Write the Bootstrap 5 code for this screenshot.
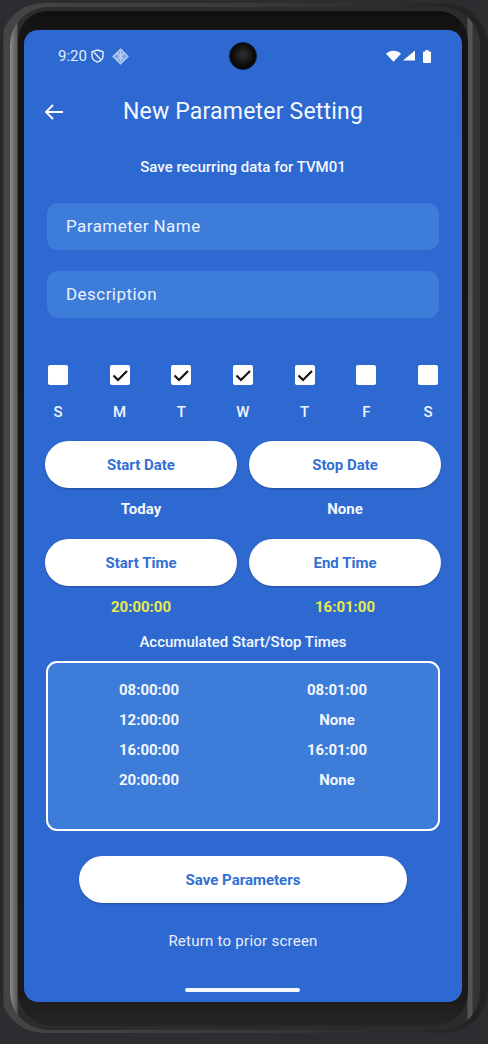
<!DOCTYPE html>
<html lang="en"><head><meta charset="utf-8"><title>New Parameter Setting</title>
<link href="https://cdn.jsdelivr.net/npm/bootstrap@5.3.0/dist/css/bootstrap.min.css" rel="stylesheet">
<style>
html,body{height:100%;margin:0}
body{background:#2b2d30;font-family:Roboto,"Liberation Sans",sans-serif;overflow:hidden;color:#fff}
.stage{width:488px;height:1044px;padding-top:3px;overflow:hidden}
.bezel-out{height:1030px;border-radius:44px;background:linear-gradient(90deg,#262626 0,#2a2a2a 3px,#454545 4px,#3a3a3a 50%,#222 100%);padding:4px 8px 3px 10px}
.bezel-mid{height:100%;border-radius:38px;background:linear-gradient(90deg,#8a8a8a 0,#5a5a5a 7px,#2c2c2c 8px,#2c2c2c calc(100% - 13px),#555 calc(100% - 12px),#555 calc(100% - 8px),#343434 calc(100% - 7px),#343434 100%);padding:4px 12px 4px 8px}
.bezel-in{height:100%;border-radius:30px 30px 34px 34px;background:linear-gradient(#0f0f0f 0,#141414 1.500%,#1a1a1a 97%,#262626 100%);padding:19px 0 0 6px}
.screen{position:relative;width:438px;height:972px;border-radius:14px;background:#2e69d1;overflow:hidden;padding:0 21px}
.cam{position:absolute;left:205px;top:12px;width:28px;height:28px;border-radius:50%;background:radial-gradient(circle at 50% 45%,#333 0,#0c0c0c 55%,#000 100%);border:1px solid #0a1a33}
.sbar{height:52px;padding:0 10px 0 9px;font-size:15px;color:#e4edfb}
.sbar svg{display:block}
.nudge{margin-left:2px}
.appbar{height:59px;margin:0 0 0 -1px}
.appbar h1{font-size:23px;font-weight:400;margin:0;flex:1;text-align:center;color:#f3f7fe;padding-right:18px;line-height:1;letter-spacing:.2px}
.sub{font-size:15px;font-weight:500;text-align:center;line-height:20px;margin:16px 0 26px;color:#f3f7fe}
.fld{display:block;width:392px;margin:0 0 21px 2px;height:47px;border-radius:11px;border:0;background:#3d7cd8;color:#fff;padding:0 19px 2px;font-size:17px;letter-spacing:.45px;font-family:inherit}
.fld::placeholder{color:#eaf1fc;opacity:1}
.days{margin:47px 0 0 3px;width:390px}
.dayc{width:20px;display:flex;flex-direction:column;align-items:center}
.tick{width:20px;height:20px;border-radius:2px;background:#fff;display:flex;align-items:center;justify-content:center}
.dayl{font-size:15px;font-weight:500;line-height:20px;margin-top:17px;color:#eef4fd}
.pair{display:grid;grid-template-columns:192px 192px;column-gap:12px;margin-top:19px;width:396px}
.pill{border:0;background:#fff;color:#3270d4;font-weight:700;font-size:15px;height:47px;border-radius:24px;width:100%;padding:2px 0 0;box-shadow:0 1px 2px rgba(0,0,0,.25);font-family:inherit}
.pill:hover,.pill:active{background:#fff!important;color:#3270d4!important}
.val{text-align:center;font-size:15px;font-weight:700;line-height:20px;margin-top:11px;color:#f3f7fe}
.val.hot{color:#e8ea4e}
.pair.second{margin-top:20px}
.acc{font-size:15px;font-weight:500;text-align:center;line-height:20px;margin:15px 0 9px;color:#f3f7fe}
.tbox{width:394px;margin-left:1px;height:170px;background:#3d7cd8;border:2px solid #fff;border-radius:11px;padding:12px 0 0}
.trow{display:grid;grid-template-columns:202px 174px;height:30px;font-size:15px;font-weight:700;line-height:30px;color:#f3f7fe;text-align:center}
.save{display:block;width:328px;margin:25px 0 0 34px}
.back{text-align:center;font-size:15px;line-height:20px;margin-top:28px;letter-spacing:.25px;color:#e8effb}
.home{position:absolute;left:161px;bottom:10px;width:115px;height:4px;border-radius:2px;background:#f4f8fe}
</style></head>
<body>
<div class="stage"><div class="bezel-out"><div class="bezel-mid"><div class="bezel-in">
<main class="screen">
<div class="cam"></div>
<div class="sbar d-flex align-items-center justify-content-between">
 <div class="d-flex align-items-center gap-1 ps-1"><span>9:20</span>
  <svg width="13" height="14" viewBox="0 0 13 14" fill="none" stroke="#e4edfb" stroke-width="1.4"><path d="M6.5 1 12 2.8V7c0 3-2.3 5-5.5 6C3.300 12 1 10 1 7V2.800Z"/><path d="M3 3.500 9.800 10.500"/></svg>
  <svg class="ms-1" width="17" height="17" viewBox="0 0 17 17" fill="none" stroke="#b9d0f3" stroke-width="1.2"><path d="M8.500 1 16 8.500 8.500 16 1 8.500Z" fill="#7ea6e6"/><path d="M5 5 12 12M12 5 5 12M8.500 3V14"/></svg>
 </div>
 <div class="d-flex align-items-center">
  <svg width="15" height="12" viewBox="0 0 16 12" fill="#fff"><path d="M0 3.500C4 -.8 12 -.8 16 3.500L8 12Z"/></svg>
  <svg class="nudge" width="12" height="12" viewBox="0 0 13 12" fill="#fff"><path d="M13 0V11H0Z"/></svg>
  <svg class="ms-2" width="8" height="13" viewBox="0 0 8 13" fill="#fff"><path d="M2.500 0H5.500V1.500H7Q8 1.500 8 2.500V12Q8 13 7 13H1Q0 13 0 12V2.500Q0 1.500 1 1.500H2.500Z"/></svg>
 </div>
</div>
<div class="appbar d-flex align-items-center">
 <svg width="19" height="16" viewBox="0 0 19 16" fill="none" stroke="#fff" stroke-width="1.900"><path d="M19 8H2M9 1 2 8l7 7"/></svg>
 <h1>New Parameter Setting</h1>
</div>
<p class="sub">Save recurring data for TVM01</p>
<input class="fld" type="text" placeholder="Parameter Name" aria-label="Parameter Name">
<input class="fld" type="text" placeholder="Description" aria-label="Description">
<div class="days d-flex justify-content-between">
 <div class="dayc"><div class="tick"></div><div class="dayl">S</div></div>
 <div class="dayc"><div class="tick"><svg width="16" height="13" viewBox="0 0 16 13" fill="none" stroke="#111" stroke-width="2.200"><path d="M1.500 6.500 6 11 15 2"/></svg></div><div class="dayl">M</div></div>
 <div class="dayc"><div class="tick"><svg width="16" height="13" viewBox="0 0 16 13" fill="none" stroke="#111" stroke-width="2.200"><path d="M1.500 6.500 6 11 15 2"/></svg></div><div class="dayl">T</div></div>
 <div class="dayc"><div class="tick"><svg width="16" height="13" viewBox="0 0 16 13" fill="none" stroke="#111" stroke-width="2.200"><path d="M1.500 6.500 6 11 15 2"/></svg></div><div class="dayl">W</div></div>
 <div class="dayc"><div class="tick"><svg width="16" height="13" viewBox="0 0 16 13" fill="none" stroke="#111" stroke-width="2.200"><path d="M1.500 6.500 6 11 15 2"/></svg></div><div class="dayl">T</div></div>
 <div class="dayc"><div class="tick"></div><div class="dayl">F</div></div>
 <div class="dayc"><div class="tick"></div><div class="dayl">S</div></div>
</div>
<div class="pair">
 <div><button class="btn pill">Start Date</button><div class="val">Today</div></div>
 <div><button class="btn pill">Stop Date</button><div class="val">None</div></div>
</div>
<div class="pair second">
 <div><button class="btn pill">Start Time</button><div class="val hot">20:00:00</div></div>
 <div><button class="btn pill">End Time</button><div class="val hot">16:01:00</div></div>
</div>
<div class="acc">Accumulated Start/Stop Times</div>
<div class="tbox">
 <div class="trow"><span>08:00:00</span><span>08:01:00</span></div>
 <div class="trow"><span>12:00:00</span><span>None</span></div>
 <div class="trow"><span>16:00:00</span><span>16:01:00</span></div>
 <div class="trow"><span>20:00:00</span><span>None</span></div>
</div>
<button class="btn pill save">Save Parameters</button>
<div class="back">Return to prior screen</div>
<div class="home"></div>
</main>
</div></div></div></div>
<script src="https://cdn.jsdelivr.net/npm/bootstrap@5.3.0/dist/js/bootstrap.bundle.min.js"></script>
</body></html>
